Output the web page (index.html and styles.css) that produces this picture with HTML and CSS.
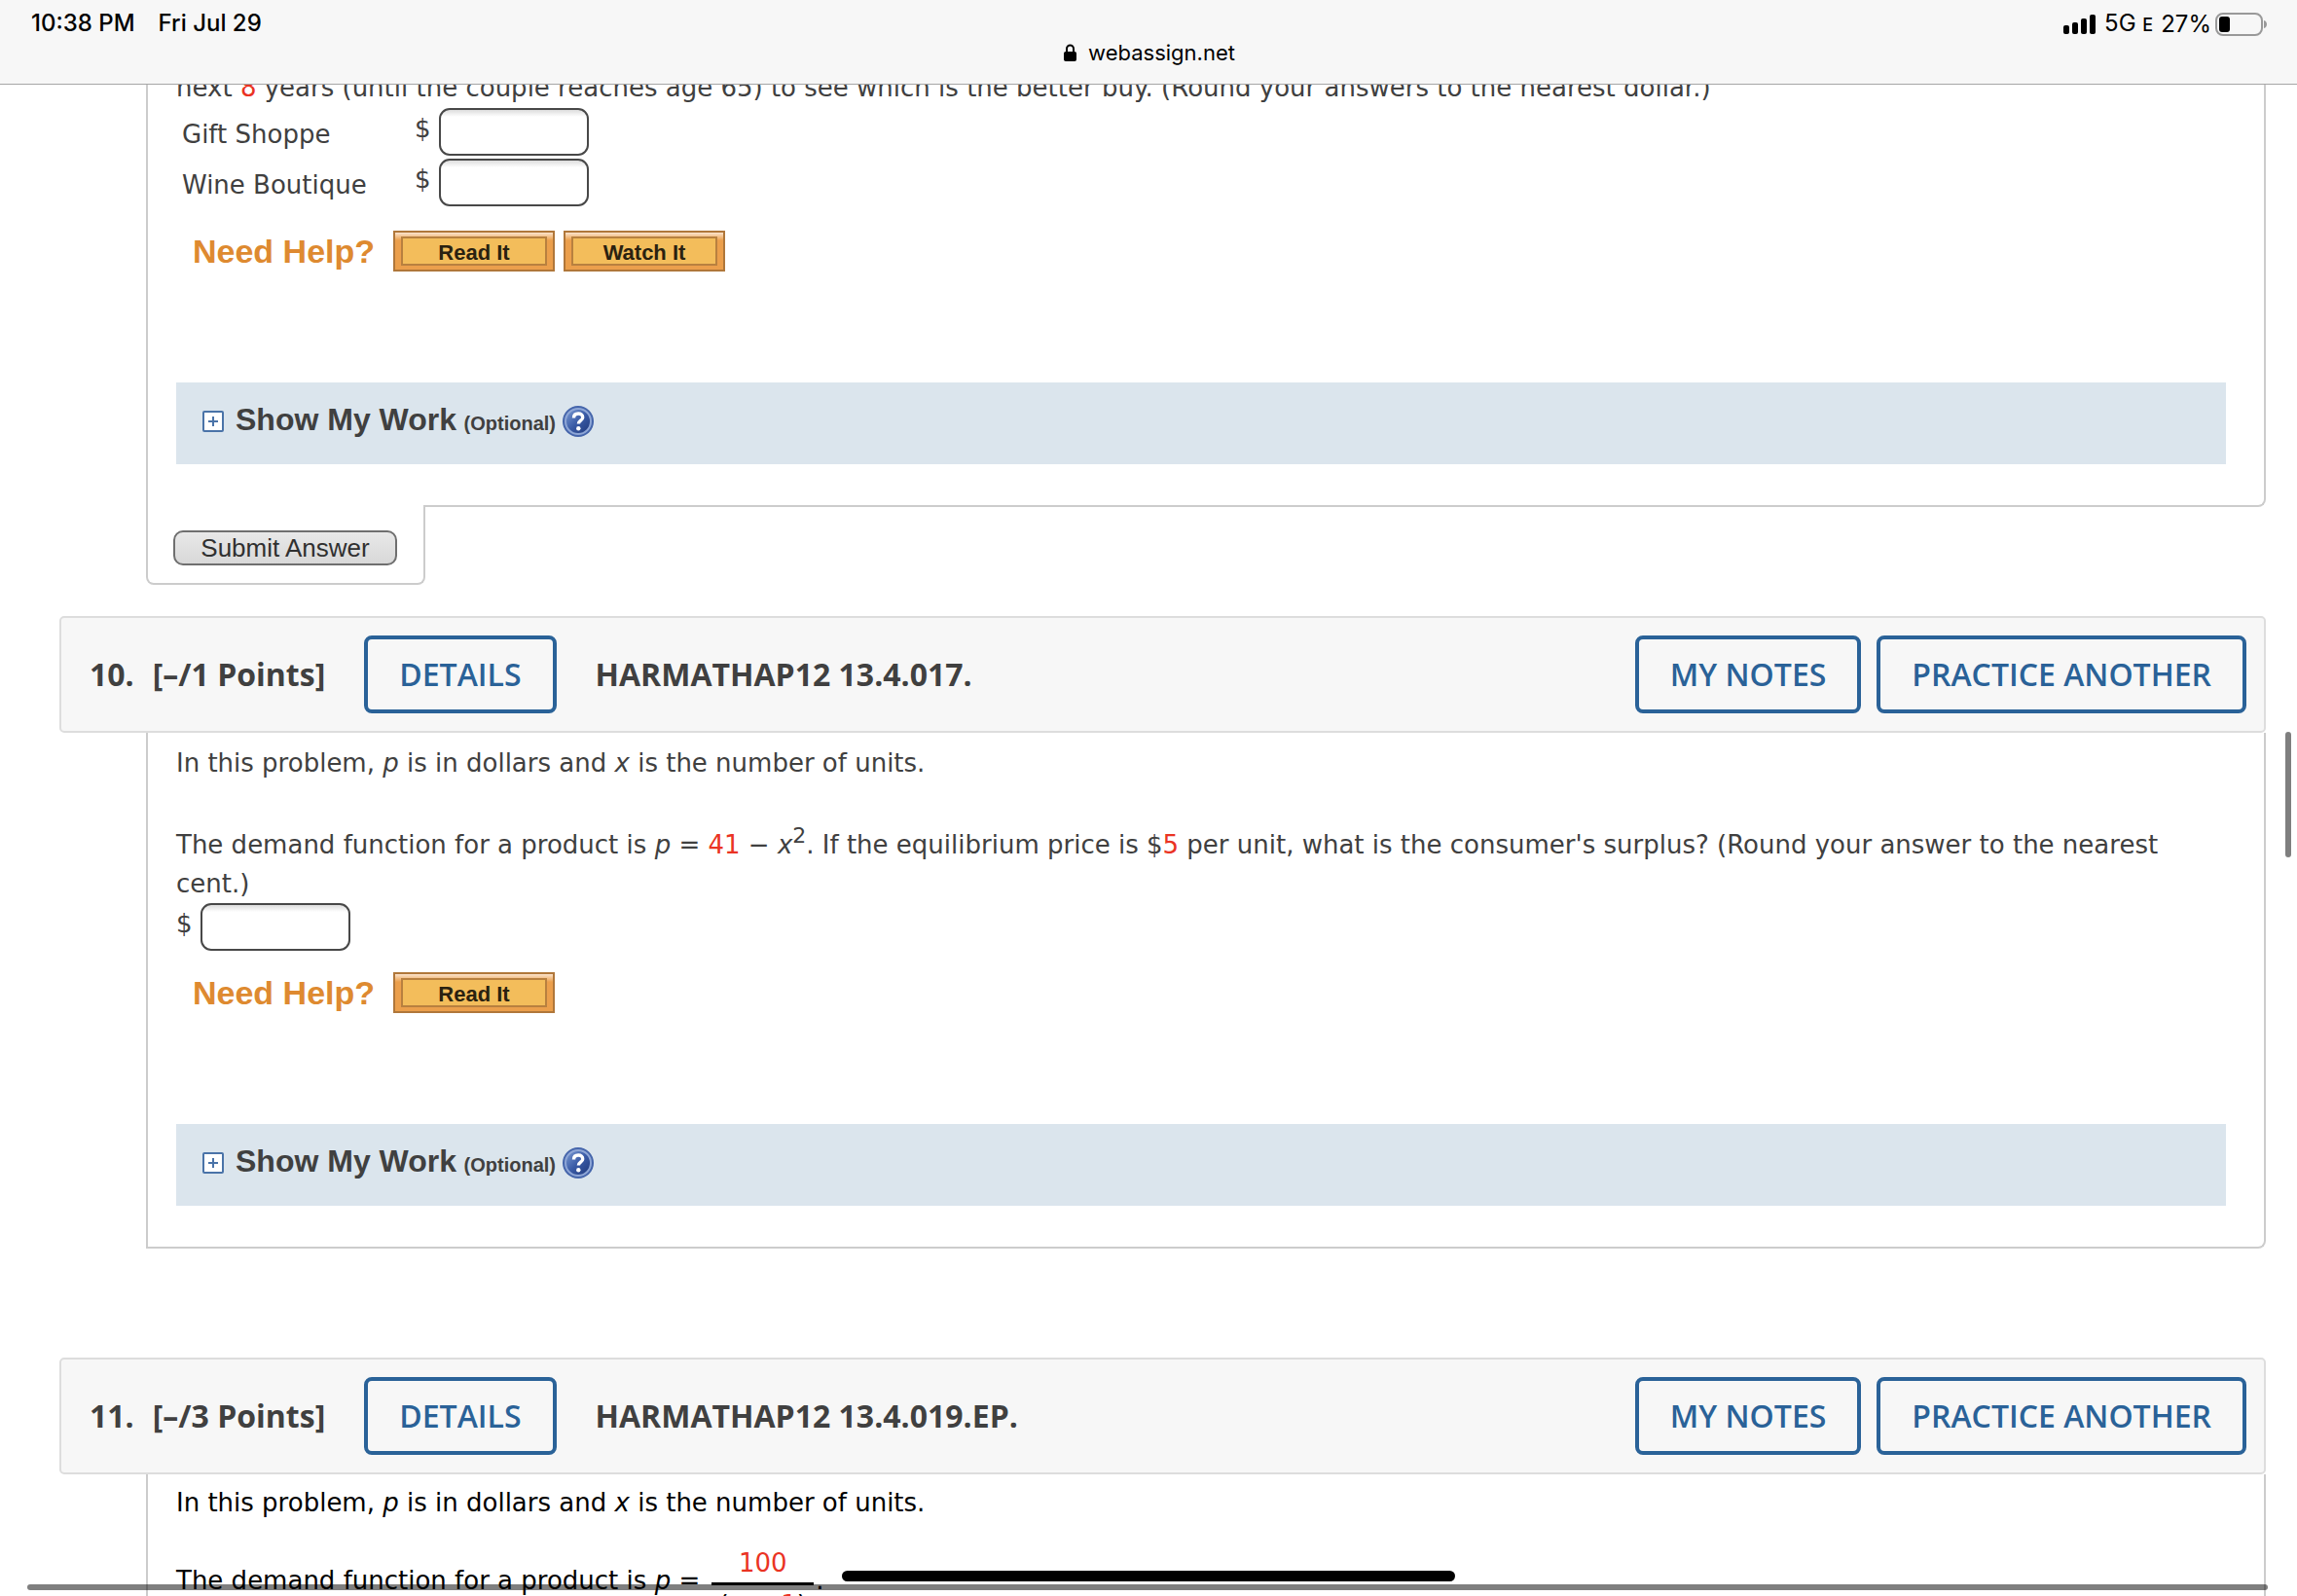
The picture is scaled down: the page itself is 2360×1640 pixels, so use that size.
FILE: index.html
```html
<!DOCTYPE html>
<html lang="en">
<head>
<meta charset="utf-8">
<meta name="viewport" content="width=device-width, initial-scale=1">
<title>webassign.net</title>
<link rel="stylesheet" href="styles.css">
</head>
<body>
<svg class="defs" aria-hidden="true">
  <defs>
    <linearGradient id="helpBall" x1="0" y1="0" x2="1" y2="1">
      <stop offset="0" stop-color="#7f9fd6"/>
      <stop offset="0.5" stop-color="#3a5ba6"/>
      <stop offset="1" stop-color="#1d3678"/>
    </linearGradient>
    <symbol id="icon-plus" viewBox="0 0 22 22">
      <rect x="1" y="1" width="20" height="20" rx="1" fill="#fff" stroke="#4a73a8" stroke-width="2"/>
      <path d="M6 11h10M11 6v10" stroke="#4a73a8" stroke-width="2" fill="none"/>
    </symbol>
    <symbol id="icon-help" viewBox="0 0 32 32">
      <circle cx="16" cy="16" r="16" fill="#4565ab"/>
      <circle cx="16" cy="16" r="13" fill="url(#helpBall)" stroke="#8ea6d6" stroke-width="2"/>
      <path d="M11.500 12.500c0-3 2-4.500 4.700-4.500 2.600 0 4.500 1.500 4.500 3.900 0 3.300-4.300 3.300-4.300 6.600" fill="none" stroke="#fff" stroke-width="3.400"/>
      <circle cx="16.300" cy="23.300" r="2.200" fill="#fff"/>
    </symbol>
  </defs>
</svg>

<header class="status">
  <div class="status-left"><span>10:38 PM</span><span>Fri Jul 29</span></div>
  <div class="address">
    <svg class="lock" viewBox="0 0 13 18" aria-hidden="true"><rect x="0" y="8" width="13" height="10" rx="2"/><path d="M3 9V5a3.500 3.500 0 0 1 7 0v4" fill="none" stroke="#000" stroke-width="2"/></svg>
    <span>webassign.net</span>
  </div>
  <div class="status-right">
    <svg class="signal" viewBox="0 0 34 20" aria-hidden="true"><rect x="0" y="11" width="6" height="9" rx="2"/><rect x="9" y="8" width="6" height="12" rx="2"/><rect x="18" y="4" width="6" height="16" rx="2"/><rect x="27" y="0" width="6" height="20" rx="2"/></svg>
    <span class="network">5G <small>E</small></span>
    <span class="charge">27%<svg class="battery" viewBox="0 0 54 24" aria-hidden="true"><rect x="1" y="1" width="47" height="22" rx="7" fill="none" stroke="#999" stroke-width="2"/><rect x="4" y="4" width="11" height="16" rx="3"/><path d="M50 8c4 1 4 7 0 8z" fill="#999"/></svg></span>
  </div>
</header>

<main class="page">
  <section class="question">
    <div class="panel panel-submit">
      <p>next <span class="num">8</span> years (until the couple reaches age 65) to see which is the better buy. (Round your answers to the nearest dollar.)</p>
      <div class="fields">
        <label for="gift">Gift Shoppe</label>
        <div class="money"><span>$</span><input id="gift" type="text"></div>
        <label for="wine">Wine Boutique</label>
        <div class="money"><span>$</span><input id="wine" type="text"></div>
      </div>
      <div class="help"><span class="help-title">Need Help?</span><button class="help-btn" type="button">Read It</button><button class="help-btn" type="button">Watch It</button></div>
      <div class="work"><svg class="plus" aria-hidden="true"><use href="#icon-plus"/></svg><h3>Show My Work<small> (Optional)</small></h3><svg class="hint" aria-hidden="true"><use href="#icon-help"/></svg></div>
    </div>
    <div class="submit-tab"><button class="submit" type="button">Submit Answer</button></div>
  </section>

  <section class="question">
    <header class="bar">
      <h2><span>10.</span><span>[–/1 Points]</span></h2>
      <button class="outline" type="button">DETAILS</button>
      <span class="code">HARMATHAP12 13.4.017.</span>
      <div class="actions"><button class="outline" type="button">MY NOTES</button><button class="outline" type="button">PRACTICE ANOTHER</button></div>
    </header>
    <div class="panel">
      <p class="intro">In this problem, <i>p</i> is in dollars and <i>x</i> is the number of units.</p>
      <p>The demand function for a product is <i>p</i> = <span class="num">41</span> − <i>x</i><sup>2</sup>. If the equilibrium price is $<span class="num">5</span> per unit, what is the consumer's surplus? (Round your answer to the nearest cent.)</p>
      <div class="money"><label for="surplus">$</label><input id="surplus" type="text"></div>
      <div class="help"><span class="help-title">Need Help?</span><button class="help-btn" type="button">Read It</button></div>
      <div class="work"><svg class="plus" aria-hidden="true"><use href="#icon-plus"/></svg><h3>Show My Work<small> (Optional)</small></h3><svg class="hint" aria-hidden="true"><use href="#icon-help"/></svg></div>
    </div>
  </section>

  <section class="question">
    <header class="bar">
      <h2><span>11.</span><span>[–/3 Points]</span></h2>
      <button class="outline" type="button">DETAILS</button>
      <span class="code">HARMATHAP12 13.4.019.EP.</span>
      <div class="actions"><button class="outline" type="button">MY NOTES</button><button class="outline" type="button">PRACTICE ANOTHER</button></div>
    </header>
    <div class="panel panel-dark">
      <p>In this problem, <i>p</i> is in dollars and <i>x</i> is the number of units.</p>
      <div class="equation"><span class="term">The demand function for a product is <i>p</i> =</span><span class="fraction"><span class="num">100</span><span class="denominator">(<i>x</i> + <span class="num">1</span>)</span></span><span class="term">.</span></div>
    </div>
  </section>
</main>

<div class="scroll-y"></div>
<div class="scroll-x"></div>
<div class="home"></div>
</body>
</html>
```
FILE: styles.css
```css
* { box-sizing: border-box; }

body {
  margin: 0;
  height: 100vh;
  overflow: hidden;
  background: #fff;
  color: #404040;
  font: 26px/40px "DejaVu Sans", sans-serif;
}

p, h2, h3 { margin: 0; }
button, input { margin: 0; font: inherit; }
i { font-style: italic; }
sup { font-size: 22px; line-height: 0; vertical-align: 11px; }
.num { color: #ea3323; }
.defs { position: absolute; width: 0; height: 0; }

/* Browser chrome */
.status {
  position: fixed;
  inset: 0 0 auto;
  z-index: 2;
  height: 87px;
  padding: 8px 30px 0 32px;
  display: grid;
  grid-template-columns: 1fr auto 1fr;
  border-bottom: 1px solid #a6a6a6;
  background: #f7f7f7;
  color: #000;
  font: 24px/32px Inter, sans-serif;
}
.status-left { display: flex; gap: 24px; font-weight: 500; }
.address { display: flex; align-items: center; align-self: start; gap: 12px; padding-top: 30px; font-size: 22px; }
.lock { width: 13px; height: 18px; }
.status-right { display: flex; justify-content: flex-end; align-items: center; align-self: start; gap: 8px; }
.charge { display: flex; align-items: center; gap: 4px; }
.signal { width: 34px; height: 20px; }
.battery { width: 54px; height: 24px; }
.network small { font-size: 18px; font-weight: 500; }

/* Questions */
.page { padding: 70px 32px 0 61px; }
.question { margin-bottom: 32px; }
.question:nth-child(2) { margin-bottom: 112px; }
.panel {
  margin-left: 89px;
  padding: 11px 39px 42px 29px;
  border: 2px solid #ccc;
  border-top: 0;
  border-radius: 0 0 8px 0;
}
.panel-submit { padding-top: 0; }
.panel-dark { padding-top: 9px; color: #000; }
.intro { margin-bottom: 44px; }

.submit-tab {
  position: relative;
  width: 287px;
  margin: -2px 0 0 89px;
  padding: 26px 27px 18px 26px;
  border: 2px solid #ccc;
  border-top: 0;
  border-radius: 0 0 8px 8px;
  background: #fff;
}
.submit {
  display: block;
  width: 100%;
  height: 36px;
  padding: 0;
  border: 2px solid #6f6f6f;
  border-radius: 10px;
  background: linear-gradient(#e8e8e8, #d8d8d8);
  color: #303030;
  font: 26px/32px "Liberation Sans", sans-serif;
}

.fields {
  display: grid;
  grid-template-columns: 239px auto;
  justify-content: start;
  row-gap: 3px;
  margin: 1px 0 0 6px;
  padding-bottom: 3px;
}
.fields > label { line-height: 54px; height: 49px; }
.money { display: flex; gap: 8px; line-height: 43px; }
.money input {
  width: 154px;
  height: 49px;
  padding: 0 8px;
  border: 2px solid #484848;
  border-radius: 11px;
  background: linear-gradient(#ddd, #fff 7px);
}

.help { display: flex; align-items: center; gap: 9px; margin: 22px 0 0 17px; }
.help-title {
  width: 197px;
  color: #de8a30;
  font: bold 34px/40px "Liberation Sans", sans-serif;
}
.help-btn {
  width: 166px;
  height: 42px;
  padding: 4px 0 0;
  border: 2px solid #b0773a;
  background: linear-gradient(#fbe3cc, #eb9f4c 8px);
  color: #2a2110;
  font: bold 22px/26px "Liberation Sans", sans-serif;
  position: relative;
  z-index: 0;
}
.help-btn::before {
  content: "";
  position: absolute;
  inset: 4px 6px;
  z-index: -1;
  border: 2px solid #b8803f;
  background: #f3bd5b;
}

.work {
  display: flex;
  align-items: center;
  height: 84px;
  margin-top: 114px;
  padding: 0 27px 5px;
  background: #dbe5ed;
}
.plus { width: 22px; height: 22px; margin-right: 12px; }
.work h3 { font: bold 32px/40px "Liberation Sans", sans-serif; }
.work small { margin-left: 2px; font-size: 20px; }
.hint { width: 32px; height: 32px; margin-left: 7px; }

/* Question header */
.bar {
  display: flex;
  align-items: center;
  height: 120px;
  padding: 0 18px 0 29px;
  border: 2px solid #ddd;
  border-radius: 5px;
  background: #f7f7f7;
  font: bold 32px/44px "Open Sans", sans-serif;
}
.bar h2 { display: flex; gap: 19px; margin-right: 40px; font: inherit; }
.code { margin-left: 40px; }
.actions { display: flex; gap: 16px; margin-left: auto; }
.outline {
  height: 80px;
  padding: 0 32px;
  border: 4px solid #2a6298;
  border-radius: 8px;
  background: #f7f7f7;
  color: #2a6298;
  font-weight: 600;
}

.equation { display: flex; align-items: center; margin-top: 22px; }
.term { padding-bottom: 8px; }
.fraction { display: flex; flex-direction: column; align-items: center; width: 105px; margin: 0 2px 0 12px; }
.denominator { width: 100%; border-top: 3px solid #000; text-align: center; }

/* Scroll indicators and home bar */
.scroll-y, .scroll-x, .home { position: fixed; z-index: 3; border-radius: 6px; }
.scroll-y { top: 752px; right: 6px; width: 6px; height: 129px; background: rgba(0, 0, 0, .5); }
.scroll-x { left: 28px; right: 30px; bottom: 6px; height: 6px; background: rgba(0, 0, 0, .5); }
.home { left: 50%; bottom: 15px; width: 630px; height: 11px; margin-left: -315px; background: #000; }
```
